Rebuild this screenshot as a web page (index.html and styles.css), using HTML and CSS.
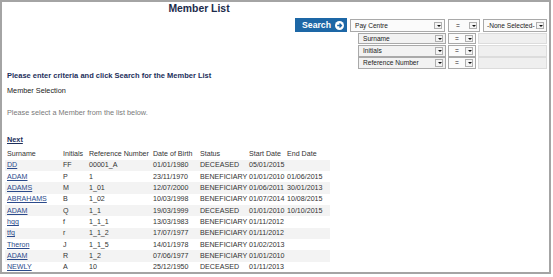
FILE: index.html
```html
<!DOCTYPE html>
<html lang="en">
  <head>
    <meta charset="UTF-8" />
    <title>Member List</title>
    <link rel="stylesheet" href="styles.css">
  </head>
  <body>
    <div class="frame">
      <h1 class="page-title">Member List</h1>

      <div class="search-panel">
        <div class="crit-row crit-main">
          <button type="button" class="btn-search">Search
            <svg class="go-icon" viewBox="0 0 10 10" width="9" height="9">
              <circle cx="5" cy="5" r="5" fill="#fff"/>
              <path d="M2.4 5h4.4M5 2.8 7.2 5 5 7.2" stroke="#1d67a6" stroke-width="1.5" fill="none"/>
            </svg>
          </button>
          <div class="dd dd-field dd-wide">Pay Centre<span class="dd-arrow"></span></div>
          <div class="dd dd-op dd-op-wide">=<span class="dd-arrow"></span></div>
          <div class="dd dd-value">-None Selected-<span class="dd-arrow"></span></div>
        </div>
        <div class="crit-row">
          <div class="dd dd-field">Surname<span class="dd-arrow"></span></div>
          <div class="dd dd-op">=<span class="dd-arrow"></span></div>
          <div class="crit-input"></div>
        </div>
        <div class="crit-row">
          <div class="dd dd-field">Initials<span class="dd-arrow"></span></div>
          <div class="dd dd-op">=<span class="dd-arrow"></span></div>
          <div class="crit-input"></div>
        </div>
        <div class="crit-row">
          <div class="dd dd-field">Reference Number<span class="dd-arrow"></span></div>
          <div class="dd dd-op">=<span class="dd-arrow"></span></div>
          <div class="crit-input"></div>
        </div>
      </div>

      <p class="instructions">Please enter criteria and click Search for the Member List</p>
      <p class="section-label">Member Selection</p>
      <p class="hint">Please select a Member from the list below.</p>
      <a href="#" class="next-link">Next</a>

      <table class="member-table">
        <colgroup>
          <col class="c-surname"><col class="c-init"><col class="c-ref"><col class="c-dob">
          <col class="c-status"><col class="c-start"><col class="c-end">
        </colgroup>
        <thead>
          <tr><th>Surname</th><th>Initials</th><th>Reference Number</th><th>Date of Birth</th><th>Status</th><th>Start Date</th><th>End Date</th></tr>
        </thead>
        <tbody>
          <tr><td><a href="#">DD</a></td><td>FF</td><td>00001_A</td><td>01/01/1980</td><td>DECEASED</td><td>05/01/2015</td><td></td></tr>
          <tr><td><a href="#">ADAM</a></td><td>P</td><td>1</td><td>23/11/1970</td><td>BENEFICIARY</td><td>01/01/2010</td><td>01/06/2015</td></tr>
          <tr><td><a href="#">ADAMS</a></td><td>M</td><td>1_01</td><td>12/07/2000</td><td>BENEFICIARY</td><td>01/06/2011</td><td>30/01/2013</td></tr>
          <tr><td><a href="#">ABRAHAMS</a></td><td>B</td><td>1_02</td><td>10/03/1998</td><td>BENEFICIARY</td><td>01/07/2014</td><td>10/08/2015</td></tr>
          <tr><td><a href="#">ADAM</a></td><td>Q</td><td>1_1</td><td>19/03/1999</td><td>DECEASED</td><td>01/01/2010</td><td>10/10/2015</td></tr>
          <tr><td><a href="#">hqg</a></td><td>f</td><td>1_1_1</td><td>13/03/1983</td><td>BENEFICIARY</td><td>01/11/2012</td><td></td></tr>
          <tr><td><a href="#">tfq</a></td><td>r</td><td>1_1_2</td><td>17/07/1977</td><td>BENEFICIARY</td><td>01/11/2012</td><td></td></tr>
          <tr><td><a href="#">Theron</a></td><td>J</td><td>1_1_5</td><td>14/01/1978</td><td>BENEFICIARY</td><td>01/02/2013</td><td></td></tr>
          <tr><td><a href="#">ADAM</a></td><td>R</td><td>1_2</td><td>07/06/1977</td><td>BENEFICIARY</td><td>01/01/2010</td><td></td></tr>
          <tr><td><a href="#">NEWLY</a></td><td>A</td><td>10</td><td>25/12/1950</td><td>DECEASED</td><td>01/11/2013</td><td></td></tr>
        </tbody>
      </table>
    </div>
  </body>
</html>
```

FILE: styles.css
```css
* {
  margin: 0;
  padding: 0;
  box-sizing: border-box;
}

body {
  background-color: #fff;
  color: #333;
  font-family: "Liberation Sans", Arial, sans-serif;
  font-size: 7.3px;
}

.frame {
  width: 551px;
  height: 274px;
  border: 2px solid #a4a4a4;
  padding: 0 2px 0 3px;
}

.page-title {
  font-size: 10.4px;
  font-weight: 700;
  color: #1c2b4b;
  text-align: center;
  padding-right: 154px;
  height: 14px;
  line-height: 14px;
}

.search-panel {
  display: flex;
  flex-direction: column;
  align-items: flex-end;
  margin-top: 2px;
}

.crit-row {
  display: flex;
  align-items: center;
  gap: 2px;
  height: 12.3px;
}

.crit-main {
  height: 14px;
  gap: 3px;
  margin-bottom: 0.5px;
}

.btn-search {
  width: 52px;
  height: 14px;
  background-color: #1d67a6;
  color: white;
  border: none;
  font-family: inherit;
  font-size: 8.7px;
  font-weight: 700;
  display: flex;
  align-items: center;
  justify-content: flex-end;
  gap: 4px;
  padding-right: 3px;
}

.dd {
  position: relative;
  height: 11.5px;
  border: 1px solid #a9a9a9;
  background-color: #fbfbfb;
  padding-left: 4px;
  font-size: 6.6px;
  line-height: 9.5px;
  color: #222;
  white-space: nowrap;
  overflow: hidden;
}

.crit-main .dd {
  height: 13px;
  line-height: 11px;
}

.dd-arrow {
  position: absolute;
  right: 2px;
  top: 1px;
  width: 8px;
  height: 7.5px;
  border: 1px solid #b0b0b0;
  background-color: #f4f4f4;
}

.crit-main .dd-arrow {
  top: 2px;
}

.dd-arrow::after {
  content: "";
  position: absolute;
  left: 1.5px;
  top: 2px;
  border-left: 2px solid transparent;
  border-right: 2px solid transparent;
  border-top: 2px solid #111;
}

.dd-field {
  width: 88px;
  background-color: #f2f2f2;
}

.dd-wide {
  width: 95px;
  background-color: #fbfbfb;
}

.dd-op {
  width: 28px;
  padding-left: 6px;
}

.dd-op-wide {
  width: 32px;
  padding-left: 7px;
}

.dd-value {
  width: 64px;
  padding-left: 3px;
}

.crit-input {
  width: 69px;
  height: 11.5px;
  border: 1px solid #dcdcdc;
  background-color: #efefef;
}

.instructions {
  color: #1c2e5a;
  font-weight: 700;
  font-size: 7.5px;
  margin-top: 2px;
  padding-left: 2px;
  height: 10px;
  line-height: 10px;
}

.section-label {
  color: #222;
  padding-left: 2px;
  margin-top: 5px;
  height: 10px;
  line-height: 10px;
}

.hint {
  color: #7a7a7a;
  padding-left: 2px;
  margin-top: 12px;
  height: 10px;
  line-height: 10px;
}

.next-link {
  display: block;
  width: max-content;
  color: #1c2e5a;
  font-weight: 700;
  margin-left: 2px;
  margin-top: 17px;
  height: 10px;
  line-height: 10px;
}

.member-table {
  border-collapse: collapse;
  table-layout: fixed;
  width: 325px;
  margin-top: 3px;
  font-size: 7.1px;
}

.member-table th,
.member-table td {
  text-align: left;
  font-weight: 400;
  height: 11.33px;
  padding: 0 0 0 2px;
  white-space: nowrap;
  color: #333;
}

.member-table tbody tr:nth-child(odd) {
  background-color: #f3f3f3;
}

.member-table td a {
  color: #2b4a8b;
}

.c-surname { width: 56px; }
.c-init { width: 26px; }
.c-ref { width: 64px; }
.c-dob { width: 47px; }
.c-status { width: 49px; }
.c-start { width: 38px; }
.c-end { width: 45px; }
```
